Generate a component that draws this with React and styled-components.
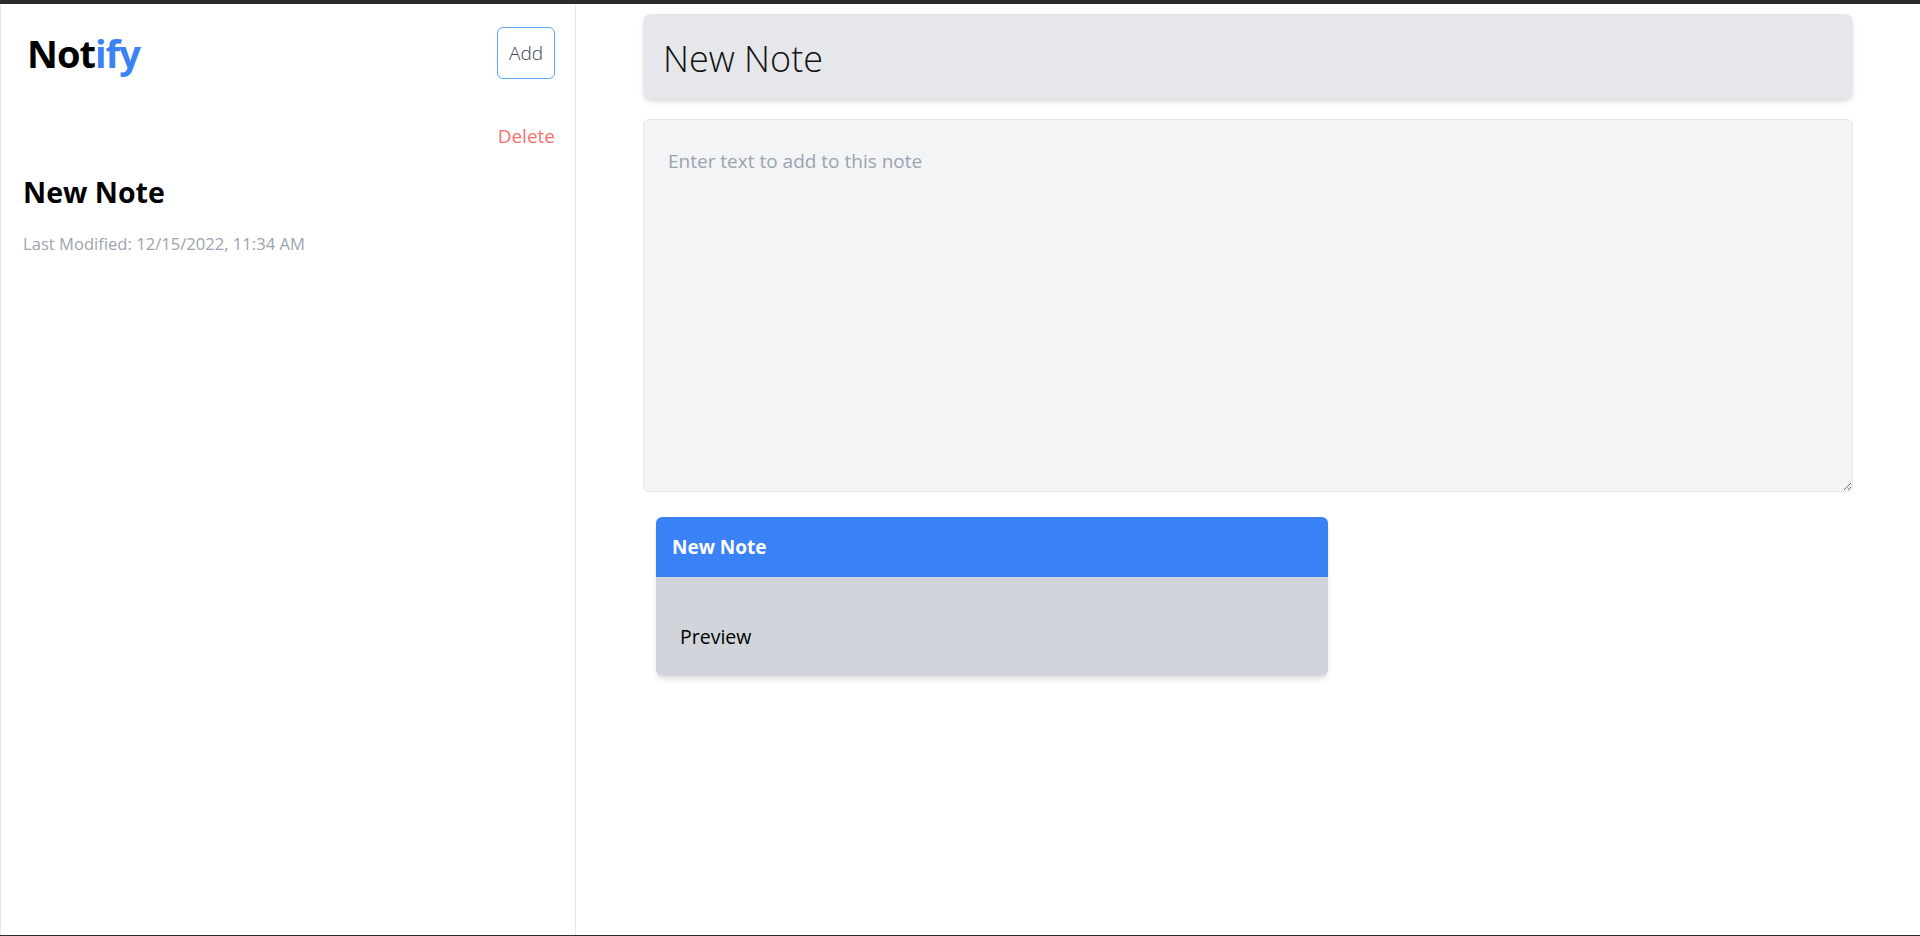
import React from "react";
import styled, { createGlobalStyle } from "styled-components";

const GlobalStyle = createGlobalStyle`
    html, body {
        margin: 0;
        padding: 0;
        background: #ffffff;
        font-family: "Open Sans", "Noto Sans", sans-serif;
    }
    * {
        box-sizing: border-box;
    }
`;

const Frame = styled.div`
    height: 100vh;
    display: flex;
    border-top: 4px solid #2b2b2b;
    border-bottom: 1px solid #2b2b2b;
    overflow: hidden;
`;

const Sidebar = styled.aside`
    width: 576px;
    flex-shrink: 0;
    border-left: 1px solid #e5e7eb;
    border-right: 1px solid #e5e7eb;
    padding: 23px 20px 0 22px;
    display: flex;
    flex-direction: column;
`;

const SidebarHeader = styled.div`
    display: flex;
    justify-content: space-between;
    align-items: center;
`;

const Logo = styled.h1`
    margin: 0 0 0 4px;
    font-size: 38px;
    font-weight: 700;
    letter-spacing: -1px;
    color: #000000;
`;

const LogoAccent = styled.span`
    color: #3b82f6;
`;

const AddButton = styled.button`
    width: 58px;
    height: 52px;
    border: 1px solid #60a5fa;
    border-radius: 6px;
    background: #ffffff;
    font-family: inherit;
    font-size: 19px;
    font-weight: 300;
    color: #374151;
    padding: 0;
`;

const DeleteRow = styled.div`
    margin-top: 43px;
    display: flex;
    justify-content: flex-end;
`;

const DeleteButton = styled.button`
    border: none;
    background: none;
    padding: 0;
    font-family: inherit;
    font-size: 19px;
    line-height: 28px;
    color: #f87171;
`;

const NoteItem = styled.div`
    margin-top: 23px;
`;

const NoteTitle = styled.h2`
    margin: 0;
    font-size: 28.5px;
    line-height: 38px;
    font-weight: 700;
    color: #000000;
`;

const NoteDate = styled.p`
    margin: 21px 0 0;
    font-size: 16.6px;
    line-height: 24px;
    color: #9ca3af;
`;

const Main = styled.main`
    flex: 1;
    padding: 10px 67px 0;
    display: flex;
    flex-direction: column;
`;

const TitleInput = styled.input`
    height: 85px;
    width: 100%;
    border: none;
    border-radius: 8px;
    background: #e5e7eb;
    box-shadow: 0 4px 6px -1px rgba(0, 0, 0, 0.1), 0 2px 4px -2px rgba(0, 0, 0, 0.1);
    padding: 4px 20px 0;
    font-family: inherit;
    font-size: 36px;
    font-weight: 300;
    color: #111111;
    outline: none;
`;

const BodyInput = styled.textarea`
    margin-top: 20px;
    height: 373px;
    width: 100%;
    border: 1px solid #e5e7eb;
    border-radius: 6px;
    background: #f3f4f6;
    padding: 27px 24px 24px;
    font-family: inherit;
    font-size: 19px;
    line-height: 28px;
    color: #111827;
    outline: none;
    resize: vertical;

    &::placeholder {
        color: #9ca3af;
    }
`;

const PreviewCard = styled.section`
    margin: 25px 0 0 13px;
    width: 672px;
    border-radius: 6px;
    overflow: hidden;
    box-shadow: 0 4px 6px -1px rgba(0, 0, 0, 0.1), 0 2px 4px -2px rgba(0, 0, 0, 0.1);
`;

const CardHeader = styled.div`
    height: 60px;
    background: #3b82f6;
    padding: 0 16px;
    display: flex;
    align-items: center;
    color: #ffffff;
    font-size: 19px;
    font-weight: 700;
`;

const CardBody = styled.div`
    background: #d1d5db;
    padding: 46px 24px 25px;
    font-size: 19.5px;
    line-height: 28px;
    font-weight: 500;
    color: #000000;
`;

const App = () => {
    return (
        <>
            <GlobalStyle />
            <Frame>
                <Sidebar>
                    <SidebarHeader>
                        <Logo>
                            Not<LogoAccent>ify</LogoAccent>
                        </Logo>
                        <AddButton>Add</AddButton>
                    </SidebarHeader>
                    <DeleteRow>
                        <DeleteButton>Delete</DeleteButton>
                    </DeleteRow>
                    <NoteItem>
                        <NoteTitle>New Note</NoteTitle>
                        <NoteDate>Last Modified: 12/15/2022, 11:34 AM</NoteDate>
                    </NoteItem>
                </Sidebar>
                <Main>
                    <TitleInput type="text" defaultValue="New Note" />
                    <BodyInput placeholder="Enter text to add to this note" />
                    <PreviewCard>
                        <CardHeader>New Note</CardHeader>
                        <CardBody>Preview</CardBody>
                    </PreviewCard>
                </Main>
            </Frame>
        </>
    );
};

export default App;
